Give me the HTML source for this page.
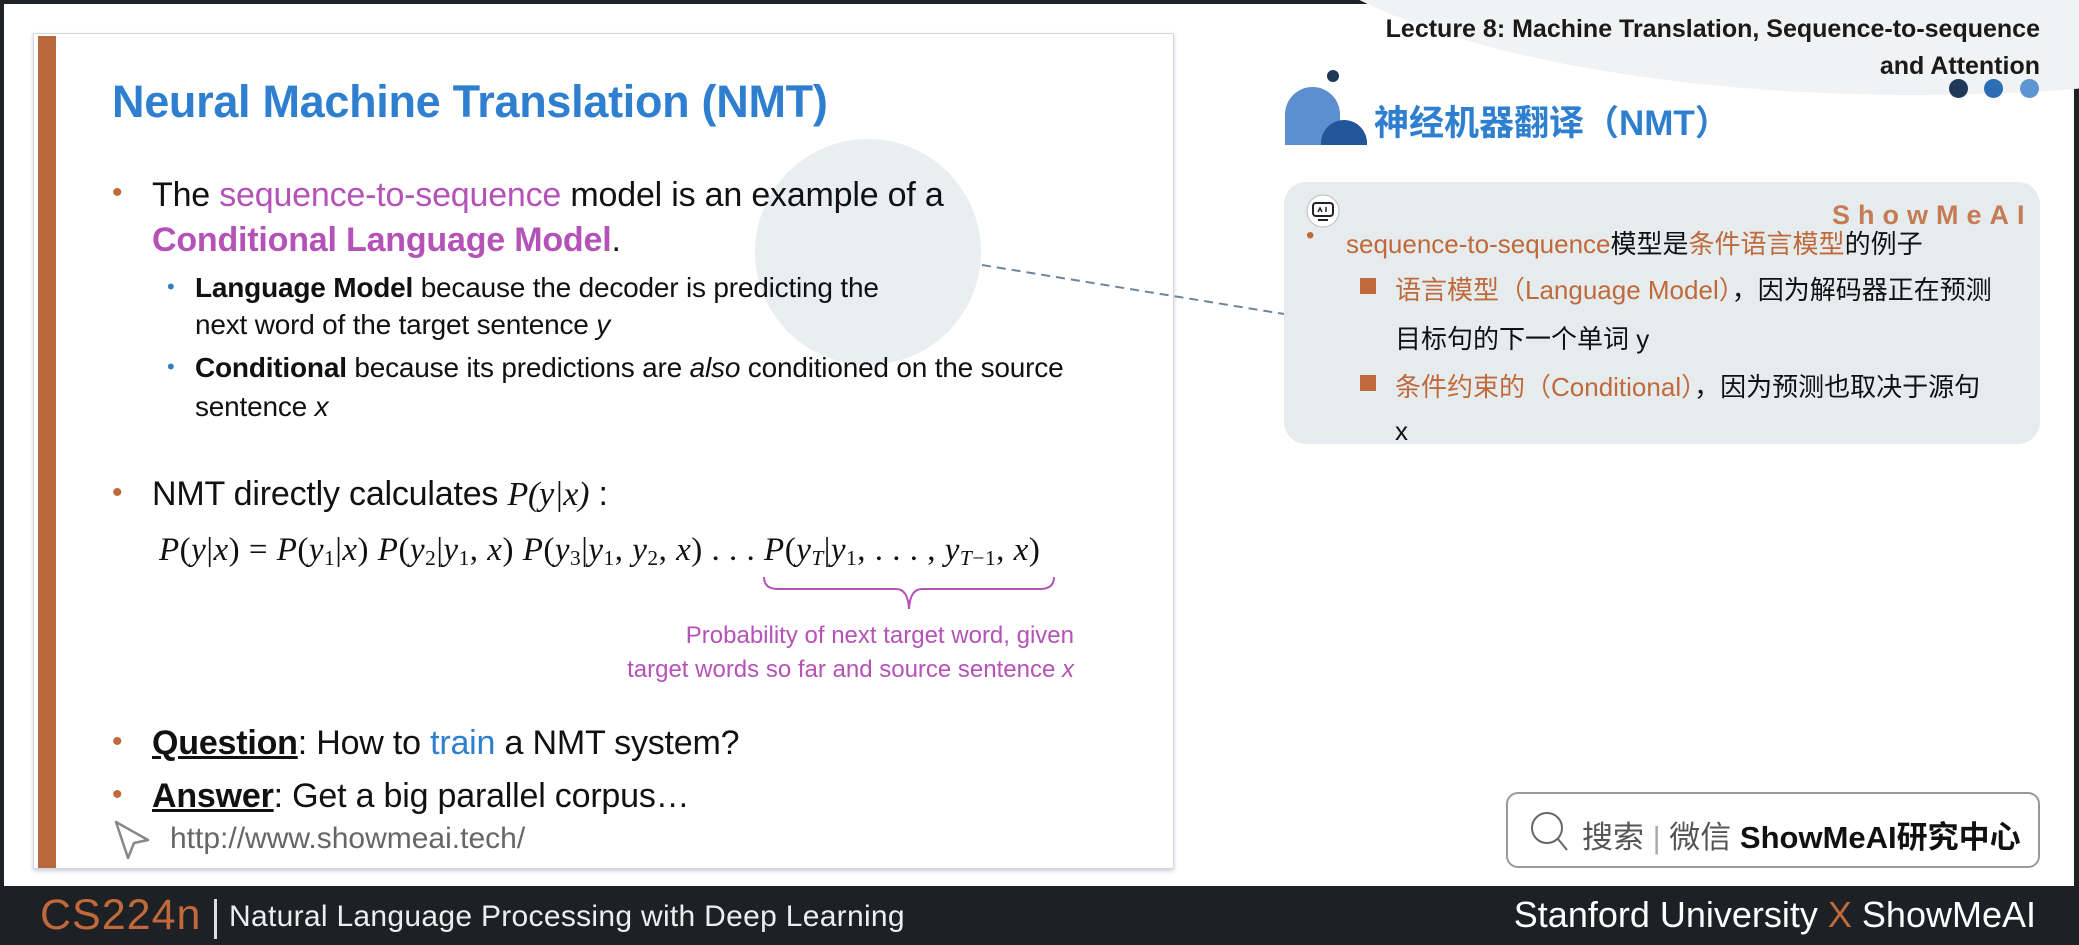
<!DOCTYPE html>
<html><head><meta charset="utf-8"><style>
*{margin:0;padding:0;box-sizing:border-box}
body{width:2079px;height:945px;overflow:hidden;background:#fff;position:relative;font-family:"Liberation Sans","Noto Sans CJK SC",sans-serif;color:#111}
.a{position:absolute;white-space:nowrap}
.pu{color:#b552b8}
.or{color:#c0693a}
.bl{color:#2e7fcf}
.m{font-family:"Liberation Serif",serif;font-style:italic}
.m .u{font-style:normal}
sub{font-size:65%;vertical-align:-5px}
</style></head><body>
<div class="a" style="left:0;top:0;width:2079px;height:4px;background:#1e2126"></div>
<div class="a" style="left:0;top:0;width:4px;height:945px;background:#1e2126"></div>
<div class="a" style="right:0;top:0;width:5px;height:945px;background:#1e2126"></div>
<!-- top right swoosh -->
<div class="a" style="left:1265px;top:-300px;width:1300px;height:395px;border-radius:50%;background:#f0f2f3"></div>
<!-- slide card -->
<div class="a" style="left:33px;top:33px;width:1141px;height:836px;background:#fff;border:1px solid #d4d8dc;box-shadow:0 2px 4px #ccd"></div>
<div class="a" style="left:38px;top:36px;width:18px;height:832px;background:#b9673c"></div>
<div class="a" style="left:755px;top:139px;width:226px;height:226px;border-radius:50%;background:#e9eff1"></div>
<svg class="a" style="left:980px;top:262px" width="310" height="56"><line x1="2" y1="3" x2="304" y2="52" stroke="#6f8598" stroke-width="2" stroke-dasharray="9,6"/></svg>

<div class="a bl" style="left:112px;top:76px;font-size:45px;font-weight:bold;letter-spacing:-0.3px">Neural Machine Translation (NMT)</div>

<div class="a or" style="left:112px;top:176px;font-size:30px">•</div>
<div class="a" style="left:152px;top:176px;font-size:34px;letter-spacing:-0.2px">The <span class="pu">sequence-to-sequence</span> model is an example of a</div>
<div class="a" style="left:152px;top:221px;font-size:34px;letter-spacing:-0.2px"><b class="pu">Conditional Language Model</b>.</div>
<div class="a bl" style="left:167px;top:274px;font-size:22px">•</div>
<div class="a" style="left:195px;top:272px;font-size:28px;letter-spacing:-0.2px"><b>Language Model</b> because the decoder is predicting the</div>
<div class="a" style="left:195px;top:309px;font-size:28px;letter-spacing:-0.2px">next word of the target sentence <i>y</i></div>
<div class="a bl" style="left:167px;top:354px;font-size:22px">•</div>
<div class="a" style="left:195px;top:352px;font-size:28px;letter-spacing:-0.2px"><b>Conditional</b> because its predictions are <i>also</i> conditioned on the source</div>
<div class="a" style="left:195px;top:391px;font-size:28px;letter-spacing:-0.2px">sentence <i>x</i></div>

<div class="a or" style="left:112px;top:476px;font-size:30px">•</div>
<div class="a" style="left:152px;top:475px;font-size:34px;letter-spacing:-0.2px">NMT directly calculates <span class="m">P</span><span class="m u">(</span><span class="m">y</span><span class="m u">|</span><span class="m">x</span><span class="m u">)</span> :</div>
<div class="a m" style="left:159px;top:532px;font-size:33px;letter-spacing:0.5px">P<span class="u">(</span>y<span class="u">|</span>x<span class="u">) = </span>P<span class="u">(</span>y<sub class="u">1</sub><span class="u">|</span>x<span class="u">)</span> P<span class="u">(</span>y<sub class="u">2</sub><span class="u">|</span>y<sub class="u">1</sub><span class="u">, </span>x<span class="u">)</span> P<span class="u">(</span>y<sub class="u">3</sub><span class="u">|</span>y<sub class="u">1</sub><span class="u">, </span>y<sub class="u">2</sub><span class="u">, </span>x<span class="u">) . . . </span>P<span class="u">(</span>y<sub>T</sub><span class="u">|</span>y<sub class="u">1</sub><span class="u">, . . . , </span>y<sub>T<span class="u">−1</span></sub><span class="u">, </span>x<span class="u">)</span></div>
<svg class="a" style="left:760px;top:575px" width="300" height="40"><path d="M4 2 Q4 14 18 14 L136 14 Q148 14 149 34 Q150 14 162 14 L280 14 Q294 14 294 2" fill="none" stroke="#b552b8" stroke-width="2"/></svg>
<div class="a pu" style="right:1005px;top:619px;font-size:24px;text-align:right;line-height:34px">Probability of next target word, given<br>target words so far and source sentence <i>x</i></div>

<div class="a or" style="left:112px;top:725px;font-size:30px">•</div>
<div class="a" style="left:152px;top:724px;font-size:34px;letter-spacing:-0.2px"><b style="text-decoration:underline">Question</b>: How to <span class="bl">train</span> a NMT system?</div>
<div class="a or" style="left:112px;top:778px;font-size:30px">•</div>
<div class="a" style="left:152px;top:777px;font-size:34px;letter-spacing:-0.2px"><b style="text-decoration:underline">Answer</b>: Get a big parallel corpus…</div>
<svg class="a" style="left:110px;top:818px" width="44" height="44"><path d="M6 4 L38 22 L24 25 L18 40 Z" fill="none" stroke="#888" stroke-width="2.5" stroke-linejoin="round"/></svg>
<div class="a" style="left:170px;top:822px;font-size:30px;color:#666">http://www.showmeai.tech/</div>

<!-- right header -->
<div class="a" style="right:39px;top:11px;font-size:25px;font-weight:bold;text-align:right;line-height:37px;color:#1a1a1a">Lecture 8:&nbsp;Machine Translation, Sequence-to-sequence<br>and Attention</div>
<div class="a" style="left:1949px;top:79px;width:19px;height:19px;border-radius:50%;background:#1f3858"></div>
<div class="a" style="left:1984px;top:79px;width:19px;height:19px;border-radius:50%;background:#2c6db3"></div>
<div class="a" style="left:2020px;top:79px;width:19px;height:19px;border-radius:50%;background:#5b96d3"></div>
<div class="a" style="left:1327px;top:70px;width:12px;height:12px;border-radius:50%;background:#1f3858"></div>
<div class="a" style="left:1285px;top:87px;width:55px;height:58px;border-radius:30px 30px 0 0;background:#5b8fcf"></div>
<div class="a" style="left:1321px;top:120px;width:46px;height:25px;border-radius:24px 24px 0 0;background:#23559a"></div>
<div class="a bl" style="left:1374px;top:95px;font-size:35px;font-weight:bold">神经机器翻译（NMT）</div>

<div class="a" style="left:1284px;top:182px;width:756px;height:262px;border-radius:22px;background:#e6ecee"></div>
<svg class="a" style="left:1305px;top:193px" width="36" height="36"><circle cx="18" cy="18" r="16" fill="#fff" stroke="#bbb"/><rect x="8" y="10" width="20" height="13" rx="3" fill="none" stroke="#222" stroke-width="2"/><line x1="13" y1="27" x2="23" y2="27" stroke="#222" stroke-width="2"/><path d="M13 19 L15 15 L17 19 M21 14 V19" stroke="#222" stroke-width="1.5" fill="none"/></svg>
<div class="a or" style="left:1832px;top:200px;font-size:27px;font-weight:bold;letter-spacing:8px;opacity:.85">ShowMeAI</div>
<div class="a or" style="left:1306px;top:222px;font-size:24px">•</div>
<div class="a" style="left:1346px;top:224px;font-size:26px"><span class="or">sequence-to-sequence</span>模型是<span class="or">条件语言模型</span>的例子</div>
<div class="a" style="left:1360px;top:278px;width:16px;height:16px;background:#c0693a"></div>
<div class="a" style="left:1395px;top:270px;font-size:26px"><span class="or">语言模型（Language Model）</span>，因为解码器正在预测</div>
<div class="a" style="left:1395px;top:319px;font-size:26px">目标句的下一个单词 y</div>
<div class="a" style="left:1360px;top:375px;width:16px;height:16px;background:#c0693a"></div>
<div class="a" style="left:1395px;top:367px;font-size:26px"><span class="or">条件约束的（Conditional）</span>，因为预测也取决于源句</div>
<div class="a" style="left:1395px;top:416px;font-size:26px">x</div>

<div class="a" style="left:1506px;top:792px;width:534px;height:76px;border:2px solid #999;border-radius:12px;background:#fff"></div>
<svg class="a" style="left:1527px;top:808px" width="44" height="46"><circle cx="20" cy="20" r="15" fill="none" stroke="#666" stroke-width="2"/><line x1="31" y1="31" x2="40" y2="42" stroke="#666" stroke-width="2"/></svg>
<div class="a" style="left:1582px;top:812px;font-size:31px;color:#555">搜索<span style="color:#aaa"> | </span>微信 <b style="color:#111">ShowMeAI研究中心</b></div>

<!-- footer -->
<div class="a" style="left:0;top:886px;width:2079px;height:59px;background:#1d2024"></div>
<div class="a or" style="left:40px;top:891px;font-size:43px;letter-spacing:1px">CS224n</div>
<div class="a" style="left:214px;top:899px;width:3px;height:40px;background:#ddd"></div>
<div class="a" style="left:229px;top:900px;font-size:30px;color:#eee;letter-spacing:0.3px">Natural Language Processing with Deep Learning</div>
<div class="a" style="right:43px;top:894px;font-size:36px;color:#fff">Stanford University <span class="or">X</span> ShowMeAI</div>
</body></html>
